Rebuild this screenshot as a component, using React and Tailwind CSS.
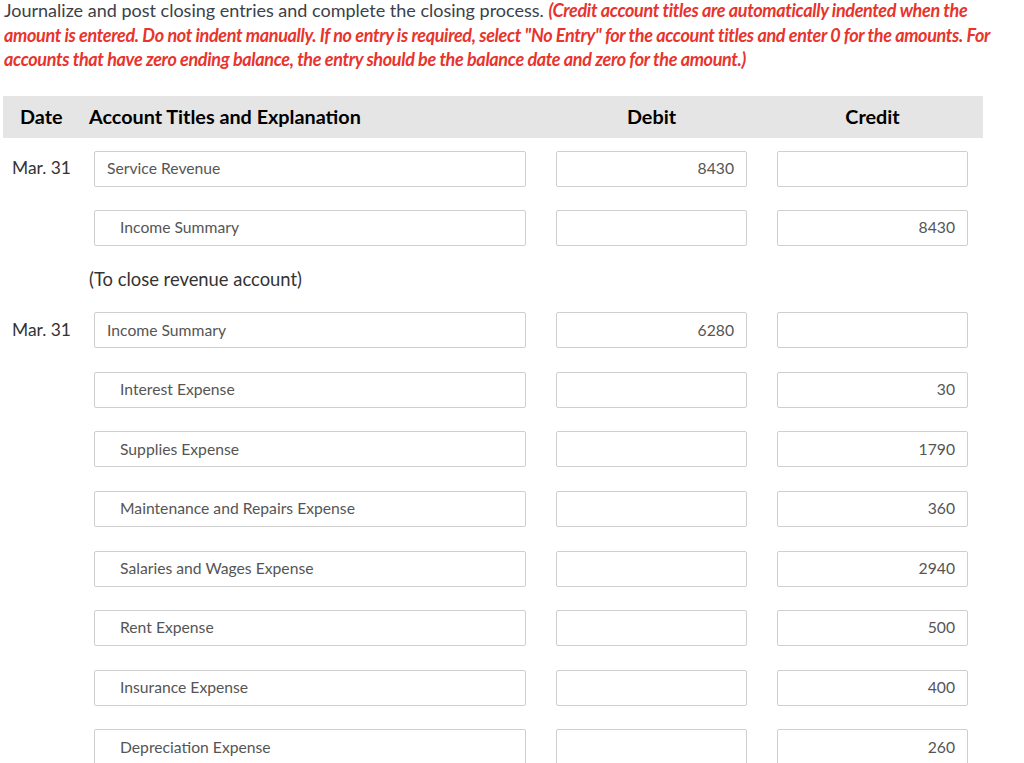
import React from "react";

const rows = [
  { date: "Mar. 31", account: "Service Revenue", debit: "8430", credit: "" },
  { account: "Income Summary", credit: "8430", indent: true },
  { note: "(To close revenue account)" },
  { date: "Mar. 31", account: "Income Summary", debit: "6280", credit: "" },
  { account: "Interest Expense", credit: "30", indent: true },
  { account: "Supplies Expense", credit: "1790", indent: true },
  { account: "Maintenance and Repairs Expense", credit: "360", indent: true },
  { account: "Salaries and Wages Expense", credit: "2940", indent: true },
  { account: "Rent Expense", credit: "500", indent: true },
  { account: "Insurance Expense", credit: "400", indent: true },
  { account: "Depreciation Expense", credit: "260", indent: true },
];

const grid = "grid grid-cols-[61px_432px_191px_191px] gap-x-[30px]";

const Field = ({ children, indent, right }) => (
  <div
    className={
      "h-[36px] flex items-center border border-[#cfcfcf] rounded-[2px] bg-white text-[15.7px] text-[#555] whitespace-nowrap " +
      (right ? "justify-end pr-[12px]" : indent ? "pl-[25px]" : "pl-[12px]")
    }
  >
    {children}
  </div>
);

export default function App() {
  return (
    <div className="bg-white min-h-[763px] font-['Lato','Liberation_Sans',sans-serif] overflow-hidden">
      <p className="-mt-[2px] pl-[4px] pr-[14px] text-[18px] leading-[24.5px] text-[#3b4149]">
        Journalize and post closing entries and complete the closing process.{" "}
        <span className="text-[#e8342c] font-bold italic tracking-[-0.35px]">
          (Credit account titles are automatically indented when the amount is entered. Do not indent manually. If no entry is required, select "No Entry" for the account titles and enter 0 for the amounts. For accounts that have zero ending balance, the entry should be the balance date and zero for the amount.)
        </span>
      </p>

      <div className="mt-[24px] ml-[3px] w-[980px]">
        <div className={grid + " h-[42px] items-center bg-[#e5e5e5] text-[19.8px] font-bold text-black whitespace-nowrap"}>
          <div className="pl-[17px]">Date</div>
          <div className="-ml-[5px]">Account Titles and Explanation</div>
          <div className="text-center">Debit</div>
          <div className="text-center">Credit</div>
        </div>

        <div className="mt-[13px] flex flex-col gap-y-[23.6px]">
          {rows.map((r, i) =>
            r.note ? (
              <div key={i} className="h-[19px] flex items-center pl-[86px] text-[18.4px] leading-[19px] text-[#333] whitespace-nowrap">
                {r.note}
              </div>
            ) : (
              <div key={i} className={grid + " items-center"}>
                <div className="pl-[9px] text-[17.4px] text-[#333] whitespace-nowrap">{r.date}</div>
                <Field indent={r.indent}>{r.account}</Field>
                <Field right>{r.debit}</Field>
                <Field right>{r.credit}</Field>
              </div>
            )
          )}
        </div>
      </div>
    </div>
  );
}
